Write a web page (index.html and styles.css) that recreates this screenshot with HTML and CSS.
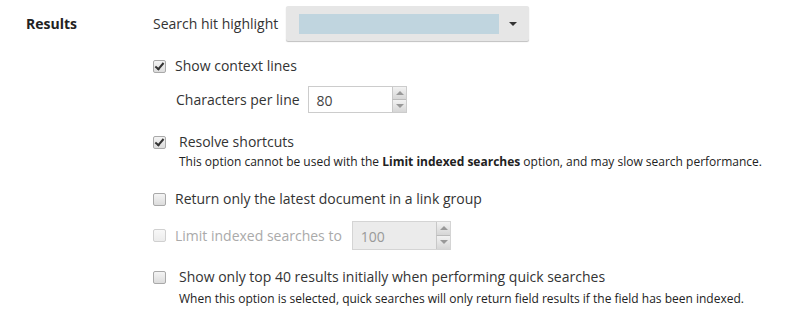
FILE: index.html
```html
<!DOCTYPE html>
<html lang="en">
<head>
  <meta charset="UTF-8" />
  <title>Search settings</title>
  <link rel="stylesheet" href="styles.css">
</head>
<body>
  <div class="section">
    <div class="section-title">Results</div>
    <div class="section-body">
      <div class="row highlight-row">
        <span class="label">Search hit highlight</span>
        <div class="dropdown">
          <span class="swatch"></span>
          <span class="caret"></span>
        </div>
      </div>

      <div class="option first">
        <span class="check checked"></span>
        <span class="text">Show context lines</span>
      </div>
      <div class="row sub-row">
        <span class="label">Characters per line</span>
        <div class="number">
          <span class="value">80</span>
          <span class="spin"><span class="up"></span><span class="down"></span></span>
        </div>
      </div>

      <div class="option shifted gap-lg">
        <span class="check checked"></span>
        <div>
          <span class="text">Resolve shortcuts</span>
          <p class="hint">This option cannot be used with the <b>Limit indexed searches</b> option, and may slow search performance.</p>
        </div>
      </div>

      <div class="option gap-md">
        <span class="check"></span>
        <span class="text">Return only the latest document in a link group</span>
      </div>

      <div class="option disabled gap-sm">
        <span class="check"></span>
        <span class="text">Limit indexed searches to</span>
        <div class="number">
          <span class="value">100</span>
          <span class="spin"><span class="up"></span><span class="down"></span></span>
        </div>
      </div>

      <div class="option shifted gap-sm2">
        <span class="check"></span>
        <div>
          <span class="text">Show only top 40 results initially when performing quick searches</span>
          <p class="hint last">When this option is selected, quick searches will only return field results if the field has been indexed.</p>
        </div>
      </div>
    </div>
  </div>
</body>
</html>
```

FILE: styles.css
```css
body {
  margin: 0;
  background: #fff;
  font-family: 'Open Sans', sans-serif;
  font-size: 14px;
  color: #333;
}

.section {
  display: flex;
  padding: 6px 0 0 26px;
}

.section-title {
  width: 127px;
  font-weight: bold;
  line-height: 35px;
  color: #222;
}

.section-body {
  display: flex;
  flex-direction: column;
}

.row {
  display: flex;
  align-items: center;
}

.label {
  margin-right: 8px;
}

.dropdown {
  width: 243px;
  height: 35px;
  box-sizing: border-box;
  background: #e6e6e6;
  border-radius: 2px;
  box-shadow: 0 1px 1px rgba(0,0,0,0.25);
  display: flex;
  align-items: center;
  padding: 0 12px 0 13px;
}

.swatch {
  width: 200px;
  height: 20px;
  background: #c0d5df;
}

.caret {
  margin-left: auto;
  width: 0;
  height: 0;
  border-left: 4px solid transparent;
  border-right: 4px solid transparent;
  border-top: 4px solid #333;
}

.option {
  display: flex;
  align-items: flex-start;
  line-height: 20px;
}

.option.first {
  margin-top: 15px;
}

.check {
  flex: none;
  width: 11px;
  height: 11px;
  margin: 4px 9px 0 0;
  border: 1px solid #a9a9a9;
  border-radius: 2px;
  background: linear-gradient(#f4f4f4, #dcdcdc);
  position: relative;
}

.check.checked::after {
  content: "";
  position: absolute;
  left: 3px;
  top: 0;
  width: 3px;
  height: 7px;
  border: solid #333;
  border-width: 0 2px 2px 0;
  transform: rotate(40deg);
}

.shifted .check {
  margin-right: 13px;
}

.sub-row {
  margin: 10px 0 0 23px;
}

.number {
  width: 99px;
  height: 27px;
  box-sizing: border-box;
  border: 1px solid #ccc;
  background: #fff;
  display: flex;
  align-items: center;
}

.number .value {
  padding-left: 8px;
  color: #444;
  line-height: 25px;
  margin-top: 2px;
}

.spin {
  margin-left: auto;
  width: 14px;
  height: 25px;
  display: flex;
  flex-direction: column;
}

.spin .up, .spin .down {
  flex: 1;
  background: linear-gradient(#f2f2f2, #d6d6d6);
  border-left: 1px solid #c8c8c8;
  position: relative;
}

.spin .up {
  border-bottom: 1px solid #bbb;
}

.spin .up::after, .spin .down::after {
  content: "";
  position: absolute;
  left: 3px;
  top: 4px;
  border-left: 4px solid transparent;
  border-right: 4px solid transparent;
}

.spin .up::after {
  border-bottom: 4px solid #999;
}

.spin .down::after {
  border-top: 4px solid #999;
}

.gap-lg {
  margin-top: 19px;
}

.gap-md {
  margin-top: 17px;
}

.gap-sm {
  margin-top: 12px;
}

.gap-sm2 {
  margin-top: 17px;
}

.hint {
  margin: 0;
  font-size: 12px;
  line-height: 20px;
  color: #222;
}

.hint.last {
  margin-top: 2px;
}

.disabled {
  align-items: center;
  color: #aaa;
}

.disabled .check {
  margin-top: 0;
  border-color: #d0d0d0;
  background: linear-gradient(#f8f8f8, #ececec);
}

.disabled .number {
  margin-left: 10px;
  background: #ebebeb;
  border-color: #d4d4d4;
  height: 29px;
}

.disabled .number .value {
  color: #999;
}

.disabled .spin {
  height: 27px;
}
```
